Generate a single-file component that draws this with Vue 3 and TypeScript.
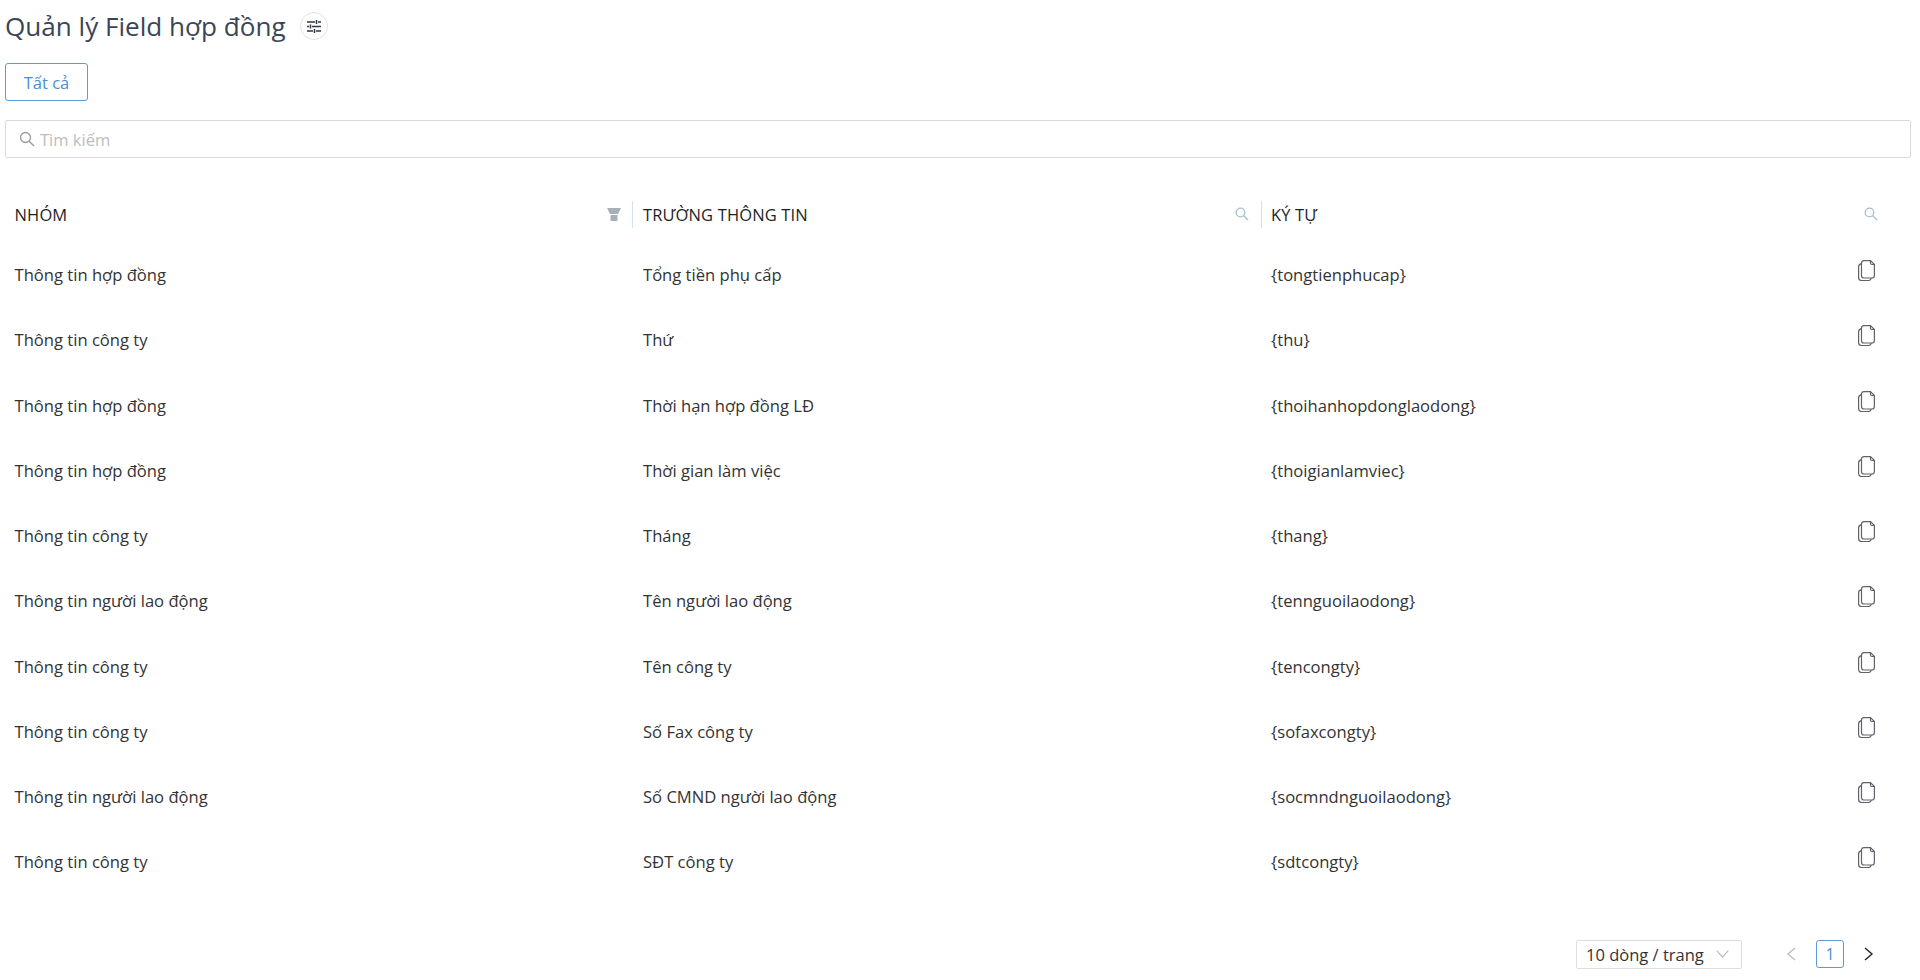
<script setup lang="ts">
interface Row { group: string; field: string; code: string }
const rows: Row[] = [
  { group: 'Thông tin hợp đồng', field: 'Tổng tiền phụ cấp', code: '{tongtienphucap}' },
  { group: 'Thông tin công ty', field: 'Thứ', code: '{thu}' },
  { group: 'Thông tin hợp đồng', field: 'Thời hạn hợp đồng LĐ', code: '{thoihanhopdonglaodong}' },
  { group: 'Thông tin hợp đồng', field: 'Thời gian làm việc', code: '{thoigianlamviec}' },
  { group: 'Thông tin công ty', field: 'Tháng', code: '{thang}' },
  { group: 'Thông tin người lao động', field: 'Tên người lao động', code: '{tennguoilaodong}' },
  { group: 'Thông tin công ty', field: 'Tên công ty', code: '{tencongty}' },
  { group: 'Thông tin công ty', field: 'Số Fax công ty', code: '{sofaxcongty}' },
  { group: 'Thông tin người lao động', field: 'Số CMND người lao động', code: '{socmndnguoilaodong}' },
  { group: 'Thông tin công ty', field: 'SĐT công ty', code: '{sdtcongty}' },
]
</script>

<template>
  <div class="page">
    <div class="title-row">
      <h1 class="title">Quản lý Field hợp đồng</h1>
      <span class="round">
        <svg width="14" height="13" viewBox="0 0 14 13" fill="none" stroke="#2f3845" stroke-width="1.500">
          <path d="M0 2h8M11 2h3M9.500 0v4M0 6.500h2M5 6.500h9M3.500 4.500v4M0 11h6M9 11h5M7.500 9v4" />
        </svg>
      </span>
    </div>
    <button class="tab">Tất cả</button>
    <div class="search">
      <svg class="search-ico" width="16" height="16" viewBox="0 0 16 16" fill="none" stroke="#9a9a9a" stroke-width="1.300">
        <circle cx="6.500" cy="6.500" r="5" /><path d="M10.200 10.200 15 15" />
      </svg>
      <span class="placeholder">Tìm kiếm</span>
    </div>
    <div class="table">
      <div class="row head">
        <div class="cell">
          <span>NHÓM</span>
          <svg class="head-ico" width="14" height="13" viewBox="0 0 14 13" fill="#a9afb8">
            <path d="M0 0h14l-3 6H3zM3.500 7h7v6h-7z" />
          </svg>
        </div>
        <div class="cell sep">
          <span>TRƯỜNG THÔNG TIN</span>
          <svg class="head-ico" width="14" height="14" viewBox="0 0 14 14" fill="none" stroke="#a9bdd0" stroke-width="1.300">
            <circle cx="5.500" cy="5.500" r="4.300" /><path d="M8.700 8.700 13 13" />
          </svg>
        </div>
        <div class="cell sep">
          <span>KÝ TỰ</span>
          <svg class="head-ico" width="14" height="14" viewBox="0 0 14 14" fill="none" stroke="#a9bdd0" stroke-width="1.300">
            <circle cx="5.500" cy="5.500" r="4.300" /><path d="M8.700 8.700 13 13" />
          </svg>
        </div>
      </div>
      <div v-for="r in rows" :key="r.code" class="row body">
        <div class="cell">{{ r.group }}</div>
        <div class="cell">{{ r.field }}</div>
        <div class="cell">
          <span>{{ r.code }}</span>
          <svg class="copy" width="17" height="21" viewBox="0 0 17 21" fill="none" stroke="#5f6368" stroke-width="1.200" stroke-linejoin="round">
            <path d="M6 .6h6.500l3.900 3.900V15.500a2.500 2.500 0 0 1-2.500 2.500H6a2.500 2.500 0 0 1-2.500-2.500V3A2.500 2.500 0 0 1 6 .6z" />
            <path d="M3.500 3.600C1.700 4 .6 5.200.6 7v10.500a3 3 0 0 0 3 3H10.500a3 3 0 0 0 2.800-2.500" />
            <path d="M12.500.6v2.400a1.500 1.500 0 0 0 1.500 1.500h2.400" />
          </svg>
        </div>
      </div>
    </div>
    <div class="pager">
      <div class="select">
        <span>10 dòng / trang</span>
        <svg width="13" height="8" viewBox="0 0 13 8" fill="none" stroke="#bdbdbd" stroke-width="1.200"><path d="M.7.700 6.500 7 12.300.700" /></svg>
      </div>
      <svg class="arrow" width="10" height="14" viewBox="0 0 10 14" fill="none" stroke="#bfbfbf" stroke-width="1.400"><path d="M9 1 2 7l7 6" /></svg>
      <span class="page-num">1</span>
      <svg class="arrow" width="10" height="14" viewBox="0 0 10 14" fill="none" stroke="#222" stroke-width="1.400"><path d="M1 1l7 6-7 6" /></svg>
    </div>
  </div>
</template>

<style>
html, body { margin: 0; background: #fff; }
</style>

<style scoped>
.page {
  font-family: "Open Sans", "Noto Sans", sans-serif;
  height: 980px;
  box-sizing: border-box;
  padding: 5px 9px 0 5px;
  color: #2b2b2b;
  display: flex;
  flex-direction: column;
  overflow: hidden;
}
.title-row { display: flex; align-items: center; gap: 14px; height: 42px; }
.title { margin: 0; font-size: 26.100px; font-weight: 400; color: #3a4657; line-height: 42px; }
.round {
  width: 28px; height: 28px; box-sizing: border-box;
  border: 1px solid #e2e2e2; border-radius: 50%;
  display: flex; align-items: center; justify-content: center;
}
.tab {
  margin-top: 16px; width: 83px; height: 38px; box-sizing: border-box;
  background: #fff; border: 1px solid #5b9bd5; border-radius: 3px;
  color: #4a90d0; font: 400 16.500px "Open Sans", sans-serif; padding: 0;
}
.search {
  margin-top: 19px; height: 38px; box-sizing: border-box;
  border: 1px solid #d9d9d9; border-radius: 2px;
  display: flex; align-items: center; padding-left: 14px; gap: 5px;
}
.search-ico { margin-left: -1px; }
.placeholder { color: #bdbdbd; font-size: 16.500px; }
.table { margin-top: 31px; margin-left: -1px; }
.row { display: grid; grid-template-columns: 628px 629px 651px; }
.head { height: 50px; color: #1f1f1f; font-size: 16.500px; font-weight: 500; letter-spacing: .15px; }
.head .cell > span { margin-top: 1px; }
.body { height: 65.250px; font-size: 16.600px; color: #333; position: relative; top: 3px; }
.cell {
  position: relative; display: flex; align-items: center; justify-content: space-between;
  padding: 0 10px; box-sizing: border-box;
}
.sep::before {
  content: ""; position: absolute; left: 0; top: 12px; height: 27px; width: 1px; background: #cfe2f1;
}
.row > .cell:nth-child(2) { padding-left: 11px; }
.row > .cell:first-child { padding-left: 10.500px; }
.head-ico { flex: none; margin-right: 1px; }
.head .cell:nth-child(2) .head-ico { margin-right: 2px; }
.head .cell:last-child .head-ico { margin-right: 24px; }
.copy { flex: none; margin-right: 27px; margin-top: -8px; }
.pager {
  margin-top: 48px; display: flex; align-items: center; justify-content: flex-end;
}
.select {
  width: 166px; height: 29px; box-sizing: border-box;
  border: 1px solid #dedede; border-radius: 2px; font-size: 16.500px; color: #333;
  display: flex; align-items: center; justify-content: space-between; padding: 0 12px 0 9px;
  margin-right: 44px;
}
.arrow { flex: none; }
.page-num {
  width: 28px; height: 28px; box-sizing: border-box; margin: 0 20px;
  border: 1px solid #5b9bd5; border-radius: 3px; color: #4a90d0; font-size: 16px;
  display: flex; align-items: center; justify-content: center;
}
.pager > .arrow:last-child { margin-right: 37px; }
</style>
